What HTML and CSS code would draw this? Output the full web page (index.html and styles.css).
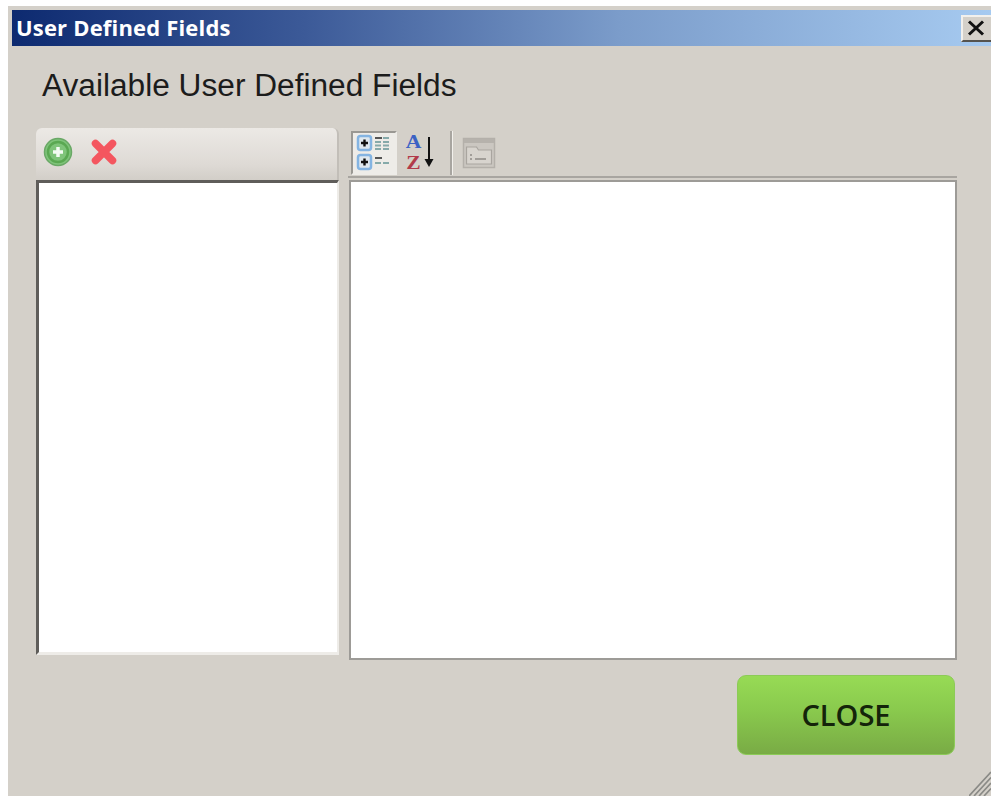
FILE: index.html
```html
<!DOCTYPE html>
<html lang="en">
<head>
<meta charset="utf-8">
<title>User Defined Fields</title>
<link rel="stylesheet" href="styles.css">
</head>
<body>
<div class="window">
  <div class="titlebar">
    <span class="title-text">User Defined Fields</span>
    <button class="win-close" type="button" aria-label="Close">
      <svg width="18" height="16" viewBox="0 0 18 16"><path d="M2 1.500 16 14.500M16 1.500 2 14.500" stroke="#111" stroke-width="3" fill="none"/></svg>
    </button>
  </div>
  <h1 class="heading">Available User Defined Fields</h1>
  <div class="panes">
    <section class="left-pane">
      <div class="left-toolbar">
        <svg class="ico-add" width="30" height="30" viewBox="0 0 30 30">
          <circle cx="15" cy="15" r="13.500" fill="#7fc47a" stroke="#6aa866" stroke-width="1.500"/>
          <circle cx="15" cy="15" r="10" fill="none" stroke="#5aa852" stroke-width="2.500"/>
          <path d="M15 10v10M10 15h10" stroke="#f4fbf3" stroke-width="3.500"/>
        </svg>
        <svg class="ico-del" width="28" height="28" viewBox="0 0 28 28">
          <path d="M5.500 5.500 22.500 22.500M22.500 5.500 5.500 22.500" stroke="#f4565f" stroke-width="7.500" stroke-linecap="round" fill="none"/>
        </svg>
      </div>
      <div class="list-box"></div>
    </section>
    <section class="right-pane">
      <div class="grid-toolbar">
        <div class="tool tool-active">
          <svg width="36" height="38" viewBox="0 0 36 38">
            <rect x="2" y="2" width="13" height="14" rx="2.500" fill="#dfe8ef" stroke="#84b4e2" stroke-width="2.500"/>
            <rect x="2" y="21" width="13" height="14" rx="2.500" fill="#dfe8ef" stroke="#84b4e2" stroke-width="2.500"/>
            <path d="M5 9h7M8.500 5.500v7M5 28h7M8.500 24.500v7" stroke="#111" stroke-width="2.400"/>
            <path d="M19 4h7M19 24h7" stroke="#555" stroke-width="2"/>
            <path d="M19 8h6M27 8h6M19 11.500h6M27 11.500h6M19 15h6M27 15h6M27 4h6M19 29h6M27 29h6" stroke="#86aaaa" stroke-width="1.800"/>
          </svg>
        </div>
        <div class="tool tool-sort">
          <span class="sort-letters"><span class="sort-a">A</span><span class="sort-z">Z</span></span>
          <svg class="sort-arrow" width="12" height="34" viewBox="0 0 12 34">
            <path d="M6 1v25" stroke="#111" stroke-width="2"/>
            <path d="M1.500 23h9l-4.500 8z" fill="#111"/>
          </svg>
        </div>
        <div class="tool-sep"></div>
        <div class="tool tool-props">
          <svg width="34" height="32" viewBox="0 0 34 32">
            <rect x="1.500" y="1.500" width="31" height="29" fill="#cbc7c1" stroke="#b4b0aa" stroke-width="1.500"/>
            <rect x="2" y="2" width="30" height="4" fill="#b6b2ac"/>
            <path d="M4.500 10h10l2 3h13v14h-25z" fill="#d8d4ce" stroke="#a9a59f" stroke-width="1.200"/>
            <path d="M8 18h2M8 22h2M13 22h11" stroke="#8f8b86" stroke-width="1.500"/>
          </svg>
        </div>
      </div>
      <div class="grid-box"></div>
    </section>
  </div>
  <div class="footer">
    <button class="close-btn" type="button">CLOSE</button>
  </div>
  <svg class="grip" width="22" height="26" viewBox="0 0 22 26">
    <path d="M0 26 22 2M5 26 22 7.500M10 26 22 13M15 26 22 18.500" stroke="#8a8a86" stroke-width="1.700" fill="none"/>
  </svg>
</div>
</body>
</html>
```
FILE: styles.css
```css
html, body {
  margin: 0;
  height: 100%;
  background: #fff;
  overflow: hidden;
}

.window {
  position: relative;
  box-sizing: border-box;
  height: 790px;
  margin: 6px 0 0 8px;
  padding-top: 4px;
  overflow: hidden;
  background: #d4d0c9;
  font-family: "Liberation Sans", Arial, sans-serif;
}

.titlebar {
  display: flex;
  align-items: center;
  justify-content: space-between;
  box-sizing: border-box;
  height: 36px;
  margin-left: 4px;
  padding-left: 4px;
  background: linear-gradient(90deg, #0d2a70 0%, #3c5a98 30%, #7b9cca 62%, #a6caf0 100%);
}

.title-text {
  margin-bottom: 2px;
  color: #fff;
  font-family: "Open Sans", "Liberation Sans", sans-serif;
  font-size: 22px;
  font-weight: 700;
  letter-spacing: 0.18px;
}

.win-close {
  display: flex;
  align-items: center;
  justify-content: center;
  flex: none;
  box-sizing: border-box;
  width: 32px;
  height: 27px;
  margin: 0 -2px 0 0;
  padding: 0 3px 0 0;
  background: #d4d0c9;
  border: 2px solid;
  border-color: #f2f0ec #55534f #55534f #f2f0ec;
}

.heading {
  margin: 21px 0 0 34px;
  color: #1c1c1c;
  font-size: 31.65px;
  font-weight: 400;
  line-height: 36px;
}

.panes {
  display: flex;
  gap: 9px;
  margin: 25px 34px 0 28px;
}

.left-pane {
  width: 303px;
}

.left-toolbar {
  display: flex;
  align-items: center;
  gap: 17px;
  box-sizing: border-box;
  height: 52px;
  padding: 0 0 4px 7px;
  background: linear-gradient(180deg, #ece9e5 0%, #dedad5 70%, #d2cec8 100%);
  border-radius: 6px 6px 0 0;
  border-right: 2px solid #c2beb8;
}

.list-box {
  box-sizing: border-box;
  height: 475px;
  background: #fff;
  border-style: solid;
  border-width: 3px 2px 3px 3px;
  border-color: #5f5d5a #eeece8 #eeece8 #5f5d5a;
}

.right-pane {
  flex: 1;
  display: flex;
  flex-direction: column;
}

.grid-toolbar {
  display: flex;
  align-items: center;
  box-sizing: border-box;
  height: 50px;
  padding: 2px 0 0 3px;
  border-bottom: 2px solid #a8a5a0;
}

.tool {
  display: flex;
  align-items: center;
  justify-content: center;
  box-sizing: border-box;
  height: 44px;
}

.tool-active {
  width: 46px;
  background: #eeece8;
  border: 2px solid;
  border-color: #9a9893 #eeece8 #eeece8 #9a9893;
}

.tool-sort {
  width: 46px;
  margin-left: 2px;
  padding-right: 3px;
}

.tool-props {
  width: 34px;
}

/* A over Z: letters kept on separate lines, slightly widened */
.sort-letters {
  display: flex;
  flex-direction: column;
  align-items: center;
  font-family: "Liberation Serif", serif;
  font-size: 18px;
  font-weight: 700;
  line-height: 21px;
  transform: scaleX(1.2);
}

.sort-a {
  color: #3c62c4;
}

.sort-z {
  color: #b23a4a;
}

.sort-arrow {
  margin-left: 3px;
}

.tool-sep {
  box-sizing: border-box;
  width: 3px;
  height: 44px;
  margin: 0 9px 0 5px;
  background: #a8a5a0;
  border-right: 1px solid #f2f0ec;
}

.grid-box {
  box-sizing: border-box;
  height: 480px;
  margin: 2px 0 0 1px;
  background: #fff;
  border: 2px solid #9d9b97;
}

.footer {
  display: flex;
  justify-content: flex-end;
  margin: 15px 36px 0 0;
}

.close-btn {
  width: 218px;
  height: 80px;
  padding-bottom: 3px;
  color: #14240a;
  font-family: "Open Sans", "Liberation Sans", sans-serif;
  font-size: 29px;
  font-weight: 600;
  background: linear-gradient(180deg, #97db55 0%, #89c94d 45%, #79ab45 100%);
  border: 1px solid #8ccb57;
  border-radius: 9px;
}

.grip {
  position: absolute;
  right: 0;
  bottom: 0;
}
```
